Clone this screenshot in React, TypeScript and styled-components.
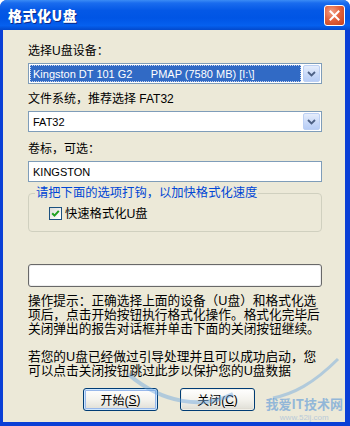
import styled, { createGlobalStyle } from "styled-components";

const GlobalStyle = createGlobalStyle`
  html, body {
    margin: 0;
    padding: 0;
    background: #ffffff;
  }
  #root {
    width: 350px;
    height: 426px;
  }
`;

const Window = styled.div`
  position: relative;
  width: 350px;
  height: 426px;
  box-sizing: border-box;
  display: flex;
  flex-direction: column;
  background: #0a3fd6;
  border-radius: 7px 7px 0 0;
  overflow: hidden;
  font-family: "Liberation Sans", "Noto Sans CJK SC", sans-serif;
`;

const TitleBar = styled.div`
  flex: none;
  height: 30px;
  display: flex;
  align-items: center;
  justify-content: space-between;
  padding: 0 5px 0 8px;
  background: linear-gradient(
    to bottom,
    #3b8cf5 0%,
    #1a6cee 10%,
    #0458e6 35%,
    #0055e5 60%,
    #0560ef 85%,
    #0349cc 100%
  );
`;

const Title = styled.span`
  color: #ffffff;
  font-family: "Noto Sans CJK SC", sans-serif;
  font-weight: 900;
  font-size: 14px;
  text-shadow: 1px 1px 0 #0b2a8a;
  letter-spacing: 0.5px;
`;

const CloseButton = styled.div`
  width: 19px;
  height: 19px;
  border: 1px solid #ffffff;
  border-radius: 3px;
  display: flex;
  align-items: center;
  justify-content: center;
  background: radial-gradient(circle at 35% 30%, #f2a085 0%, #e3633e 45%, #c2401c 100%);
`;

const Body = styled.div`
  position: relative;
  flex: 1;
  margin: 0 5px 4px 3px;
  background: #ece9d8;
  padding: 12px 23px 0 25px;
  display: flex;
  flex-direction: column;
  font-size: 12px;
  color: #000000;
`;

const Label = styled.div<{ $top: number }>`
  height: 16px;
  line-height: 16px;
  margin-top: ${(p) => p.$top}px;
  margin-bottom: 4px;
`;

const Select = styled.div`
  height: 21px;
  box-sizing: border-box;
  border: 1px solid #7f9db9;
  background: #ffffff;
  display: flex;
  align-items: stretch;
  padding: 1px;
  gap: 2px;
`;

const SelectValue = styled.div<{ $selected?: boolean }>`
  flex: 1;
  display: flex;
  align-items: center;
  padding: 0 3px;
  font-size: 11px;
  white-space: pre;
  color: ${(p) => (p.$selected ? "#ffffff" : "#000000")};
  background: ${(p) => (p.$selected ? "#316ac5" : "transparent")};
  outline: ${(p) => (p.$selected ? "1px dotted #c8d4ec" : "none")};
  outline-offset: -1px;
`;

const ArrowButton = styled.div`
  width: 17px;
  flex: none;
  box-sizing: border-box;
  border: 1px solid #bcd0f4;
  border-radius: 2px;
  background: linear-gradient(to bottom, #e6eefc 0%, #c7d8f8 60%, #b7cdf6 100%);
  display: flex;
  align-items: center;
  justify-content: center;
`;

const TextInput = styled.div`
  height: 21px;
  box-sizing: border-box;
  border: 1px solid #7f9db9;
  background: #ffffff;
  display: flex;
  align-items: center;
  padding: 0 4px;
  font-size: 11px;
`;

const GroupBox = styled.fieldset`
  margin: 4px 0 0 0;
  padding: 0 0 9px 20px;
  border: 1px solid #d0d0bf;
  border-radius: 4px;
  min-width: 0;
`;

const Legend = styled.legend`
  color: #0046d5;
  padding: 0 1px;
  margin-left: -14px;
  font-size: 12.3px;
  line-height: 14px;
`;

const CheckRow = styled.label`
  display: flex;
  align-items: center;
  gap: 3px;
  margin-top: 4px;
  font-size: 12.3px;
`;

const CheckBox = styled.span`
  width: 13px;
  height: 13px;
  box-sizing: border-box;
  border: 1px solid #1c5180;
  background: linear-gradient(135deg, #dcdcd7 0%, #ffffff 90%);
  display: flex;
  align-items: center;
  justify-content: center;
`;

const Progress = styled.div`
  margin-top: 32px;
  height: 23px;
  box-sizing: border-box;
  border: 1px solid #686868;
  border-radius: 3px;
  background: #ffffff;
  box-shadow: inset 0 0 0 1px #eeeeee;
`;

const Hint = styled.p<{ $top: number }>`
  margin: ${(p) => p.$top}px 0 0 0;
  font-size: 12.7px;
  line-height: 14px;
  white-space: nowrap;
`;

const ButtonRow = styled.div`
  margin-top: 10px;
  display: flex;
  gap: 22px;
  padding-left: 55px;
`;

const Button = styled.div<{ $default?: boolean }>`
  width: 75px;
  height: 23px;
  box-sizing: border-box;
  border: 1px solid #003c74;
  border-radius: 3px;
  background: linear-gradient(to bottom, #ffffff 0%, #f4f3ee 50%, #e3e2da 90%, #d6d0c5 100%);
  box-shadow: ${(p) =>
    p.$default ? "inset 0 0 0 1px #cee7ff, inset 0 0 0 2px #98b8ea" : "inset 0 0 0 1px #f0efe8"};
  display: flex;
  align-items: center;
  justify-content: center;
  font-size: 12px;
  u {
    text-decoration: underline;
  }
`;

const Watermark = styled.div`
  position: absolute;
  right: 2px;
  bottom: 0;
  display: flex;
  flex-direction: column;
  align-items: center;
  gap: 2px;
  pointer-events: none;
  opacity: 0.55;
`;

const WatermarkTitle = styled.span`
  font-family: "Noto Sans CJK SC", sans-serif;
  font-weight: bold;
  font-size: 13px;
  line-height: 14px;
  color: #4a8fd8;
`;

const WatermarkUrl = styled.span`
  font-family: "Liberation Sans", sans-serif;
  font-size: 8px;
  line-height: 9px;
  color: #8fb2d8;
`;

const Swoosh = styled.svg`
  position: absolute;
  left: 120px;
  bottom: 8px;
  pointer-events: none;
  opacity: 0.45;
`;

export default function App() {
  return (
    <Window>
      <GlobalStyle />
      <TitleBar>
        <Title>格式化U盘</Title>
        <CloseButton>
          <svg width="11" height="11" viewBox="0 0 11 11">
            <path d="M1.5 1.5 L9.5 9.5 M9.5 1.5 L1.5 9.5" stroke="#ffffff" strokeWidth="2" strokeLinecap="square" />
          </svg>
        </CloseButton>
      </TitleBar>
      <Body>
        <Label $top={1}>选择U盘设备：</Label>
        <Select>
          <SelectValue $selected>{"Kingston DT 101 G2      PMAP (7580 MB) [I:\\]"}</SelectValue>
          <ArrowButton>
            <svg width="9" height="6" viewBox="0 0 9 6">
              <path d="M1 1 L4.5 4.5 L8 1" stroke="#4d6185" strokeWidth="1.8" fill="none" />
            </svg>
          </ArrowButton>
        </Select>
        <Label $top={7}>文件系统，推荐选择 FAT32</Label>
        <Select>
          <SelectValue>FAT32</SelectValue>
          <ArrowButton>
            <svg width="9" height="6" viewBox="0 0 9 6">
              <path d="M1 1 L4.5 4.5 L8 1" stroke="#4d6185" strokeWidth="1.8" fill="none" />
            </svg>
          </ArrowButton>
        </Select>
        <Label $top={9}>卷标，可选：</Label>
        <TextInput>KINGSTON</TextInput>
        <GroupBox>
          <Legend>请把下面的选项打钩，以加快格式化速度</Legend>
          <CheckRow>
            <CheckBox>
              <svg width="9" height="9" viewBox="0 0 9 9">
                <path d="M1.2 4.2 L3.5 6.6 L7.8 1.8" stroke="#21a121" strokeWidth="2" fill="none" />
              </svg>
            </CheckBox>
            快速格式化U盘
          </CheckRow>
        </GroupBox>
        <Progress />
        <Hint $top={7}>
          操作提示：正确选择上面的设备（U盘）和格式化选
          <br />
          项后，点击开始按钮执行格式化操作。格式化完毕后
          <br />
          关闭弹出的报告对话框并单击下面的关闭按钮继续。
        </Hint>
        <Hint $top={14}>
          若您的U盘已经做过引导处理并且可以成功启动，您
          <br />
          可以点击关闭按钮跳过此步以保护您的U盘数据
        </Hint>
        <ButtonRow>
          <Button $default>
            开始(<u>S</u>)
          </Button>
          <Button>
            关闭(<u>C</u>)
          </Button>
        </ButtonRow>
        <Swoosh width="220" height="60" viewBox="0 0 220 60">
          <path d="M5 20 C40 50 80 55 110 40" stroke="#6aa5e0" strokeWidth="4" fill="none" />
          <path d="M215 5 C190 30 170 40 150 44" stroke="#6aa5e0" strokeWidth="3" fill="none" />
        </Swoosh>
        <Watermark>
          <WatermarkTitle>我爱IT技术网</WatermarkTitle>
          <WatermarkUrl>www.52ij.com</WatermarkUrl>
        </Watermark>
      </Body>
    </Window>
  );
}
